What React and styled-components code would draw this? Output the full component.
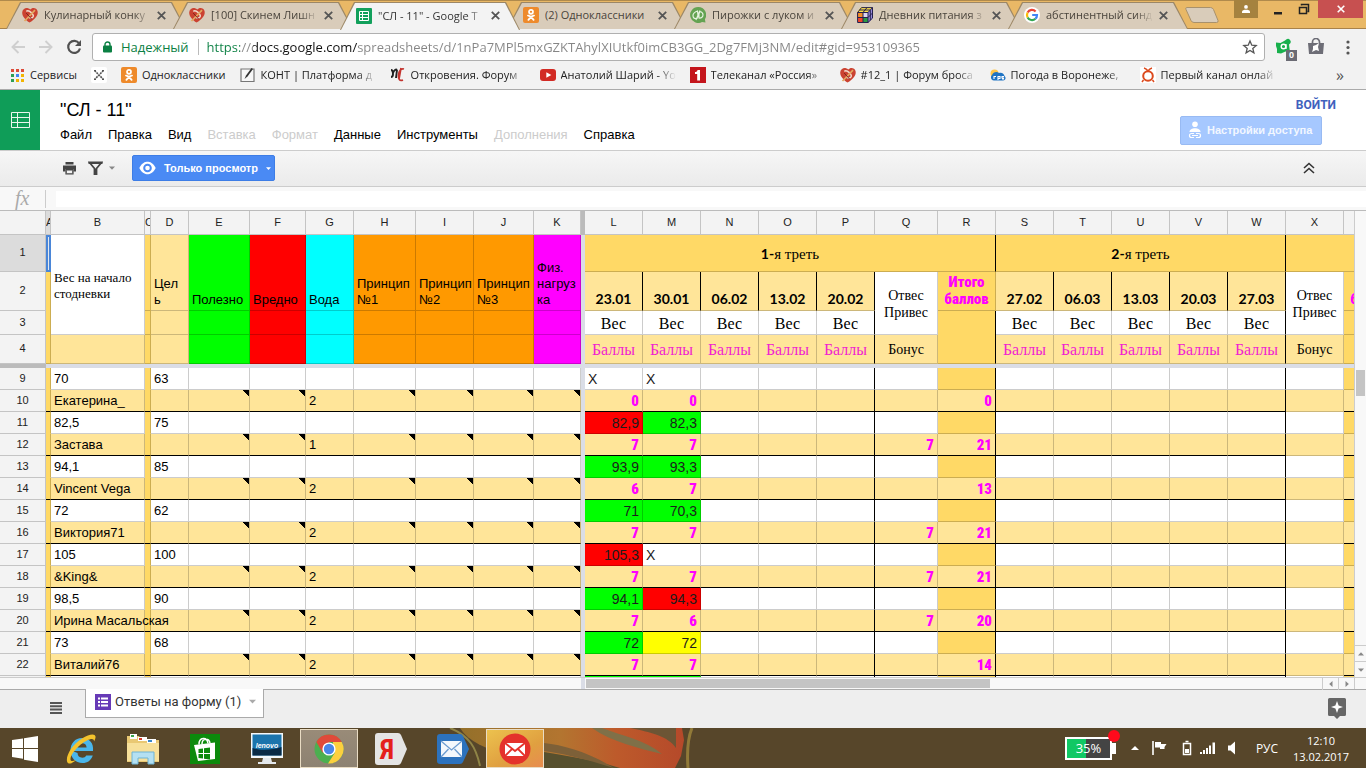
import React from 'react';
import styled, { createGlobalStyle, css } from 'styled-components';

const UI = '"Open Sans", "Noto Sans", sans-serif';
const ARIAL = 'Arial, "Liberation Sans", sans-serif';
const TIMES = '"Liberation Serif", "Times New Roman", serif';
const HEAVY = 'Impact, "Roboto Condensed", "Open Sans Condensed", Roboto, sans-serif';

const GOLD = '#ffd966';
const CREAM = '#ffe599';
const GREEN = '#00ff00';
const RED = '#ff0000';
const CYAN = '#00ffff';
const ORANGE = '#ff9900';
const PINK = '#ff00ff';
const YELLOW = '#ffff00';
const LINE = 'rgba(0, 0, 0, 0.2)';

const Global = createGlobalStyle`
  * { box-sizing: border-box; }
  body { margin: 0; font-family: ${ARIAL}; color: #000; overflow: hidden; }
  button, input { font: inherit; color: inherit; margin: 0; padding: 0; border: 0; background: none; }
  svg { display: block; flex: none; }
`;

const Page = styled.div`
  display: flex;
  flex-direction: column;
  height: 100vh;
  background: #fff;
`;

/* ---------- browser window ---------- */

const TabStrip = styled.div`
  display: flex;
  flex: none;
  height: 29px;
  padding: 1px 3px 0 6px;
  background: #e9b866;
  border-top: 1px solid #b08a4c;
  border-bottom: 1px solid #a8824a;
  font-family: ${UI};
`;

const slant = css`clip-path: polygon(14px 0, calc(100% - 14px) 0, 100% 100%, 0 100%);`;

const TabBox = styled.button`
  position: relative;
  display: flex;
  align-items: center;
  flex: 0 1 180px;
  height: ${p => (p.$active ? 28 : 27)}px;
  margin-right: -13px;
  padding: 0 16px 1px;
  gap: 6px;
  z-index: ${p => (p.$active ? 2 : 1)};
  font-size: 11px;
  line-height: 16px;
  color: ${p => (p.$active ? '#333' : '#4a443c')};
  &::before, &::after { content: ''; position: absolute; inset: 0; z-index: -2; ${slant} background: #9c8766; }
  &::after { inset: 1px 1px 0; z-index: -1; background: ${p => (p.$active ? '#f3f3f3' : '#d9ccba')}; }
`;

const fadeRight = css`mask-image: linear-gradient(to right, #000 84%, transparent);`;

const TabTitle = styled.span`
  flex: 0 0 107px;
  overflow: hidden;
  white-space: nowrap;
  text-align: left;
  ${p => p.$fade && fadeRight}
`;

const NewTab = styled.button`
  width: 36px;
  height: 18px;
  margin: 4px auto 0 9px;
`;

const WinControls = styled.div`
  display: flex;
  height: 18px;
  margin-top: -2px;
`;

const WinButton = styled.button`
  display: flex;
  align-items: center;
  justify-content: center;
  width: ${p => p.$w}px;
  background: ${p => p.$bg || 'transparent'};
`;

const AddressRow = styled.div`
  display: flex;
  align-items: center;
  flex: none;
  height: 33px;
  padding: 3px 9px 0 10px;
  background: #f2f2f2;
`;

const NavButton = styled.button`
  width: 28px;
  height: 26px;
  display: flex;
  align-items: center;
`;

const Omnibox = styled.div`
  display: flex;
  align-items: center;
  flex: 1;
  height: 28px;
  margin: 0 10px 0 -2px;
  padding: 0 6px 0 10px;
  background: #fff;
  border: 1px solid #b0b0b0;
  border-radius: 3px;
  font-family: ${UI};
`;

const Secure = styled.span`
  margin-left: 9px;
  padding-right: 9px;
  color: #0b8043;
  font-size: 13px;
  line-height: 16px;
  border-right: 1px solid #bbb;
`;

const Url = styled.input`
  flex: 1;
  min-width: 0;
  margin-left: 8px;
  height: 24px;
  outline: 0;
  font-size: 13px;
  color: transparent;
  background: linear-gradient(to right, #0b8043 33px, #888 33px 46px, #111 46px 151px, #858585 151px);
  background-clip: text;
  -webkit-background-clip: text;
`;

const ExtRow = styled.div`
  display: flex;
  align-items: center;
  gap: 14px;
`;

const Ext = styled.button`
  position: relative;
  width: 18px;
  height: 18px;
`;

const ExtCount = styled.span`
  position: absolute;
  right: -4px;
  bottom: -5px;
  width: 11px;
  height: 11px;
  background: #6b6b74;
  color: #fff;
  font: bold 9px/11px ${ARIAL};
`;

const Bookmarks = styled.nav`
  display: flex;
  align-items: center;
  flex: none;
  gap: 14px;
  height: 28px;
  padding: 0 22px 2px 9px;
  background: #f2f2f2;
  border-bottom: 1px solid #aaa;
  font-family: ${UI};
`;

const Bookmark = styled.a`
  display: flex;
  align-items: center;
  gap: 5px;
  flex: none;
  font-size: 11px;
  line-height: 16px;
  color: #222;
  text-decoration: none;
`;

const BookmarkLabel = styled.span`
  overflow: hidden;
  white-space: nowrap;
  ${p => p.$fade && css`width: 115px; ${fadeRight}`}
`;

const More = styled.button`
  margin-left: auto;
  font-size: 16px;
  line-height: 16px;
  color: #555;
`;

/* ---------- document header ---------- */

const DocHeader = styled.header`
  display: flex;
  flex: none;
  height: 61px;
  border-bottom: 1px solid #ccc;
`;

const Logo = styled.a`
  display: flex;
  align-items: center;
  justify-content: center;
  width: 40px;
  height: 60px;
  background: #0f9d58;
`;

const DocMain = styled.div`
  flex: 1;
  padding: 9px 0 0 20px;
`;

const Title = styled.h1`
  margin: 0;
  font-size: 18px;
  line-height: 22px;
  font-weight: 400;
`;

const Menu = styled.nav`
  display: flex;
  gap: 16px;
  margin-top: 6px;
`;

const MenuItem = styled.button`
  font-size: 13px;
  line-height: 16px;
  color: #000;
  &:disabled { color: #ccc; }
`;

const DocSide = styled.div`
  display: flex;
  flex-direction: column;
  align-items: flex-end;
  padding: 7px 30px 0 0;
`;

const SignIn = styled.a`
  font: bold 12px/16px Roboto, ${ARIAL};
  color: #3f61bd;
  text-decoration: none;
`;

const Share = styled.button`
  display: flex;
  align-items: center;
  gap: 5px;
  width: 142px;
  height: 29px;
  margin: 3px 14px 0 0;
  padding: 0 7px 2px;
  border: 1px solid #98baf3;
  border-radius: 2px;
  background: #a6c8ff;
  color: #f2f7ff;
  font-weight: bold;
  font-size: 11px;
  white-space: nowrap;
`;

const Toolbar = styled.div`
  display: flex;
  align-items: center;
  flex: none;
  height: 36px;
  padding: 0 51px 1px 62px;
  background: linear-gradient(#f6f6f6, #ebebeb);
  border-bottom: 1px solid #ccc;
`;

const Tool = styled.button`
  display: flex;
  align-items: center;
  gap: 6px;
  margin-right: ${p => p.$gap || 0}px;
`;

const CollapseButton = styled.button`
  margin-left: auto;
`;

const ViewOnly = styled.button`
  display: flex;
  align-items: center;
  width: 143px;
  height: 26px;
  padding: 0 4px 0 6px;
  gap: 8px;
  border: 1px solid #3d7de6;
  border-radius: 2px;
  background: #4a8af4;
  color: #fff;
  font-weight: bold;
  font-size: 11px;
  white-space: nowrap;
`;

const FormulaBar = styled.div`
  display: flex;
  align-items: center;
  flex: none;
  height: 24px;
  background: #f8f8f8;
  border-bottom: 1px solid #bbb;
`;

const Fx = styled.label`
  width: 46px;
  padding-left: 15px;
  height: 18px;
  border-right: 1px solid #ccc;
  font: italic 20px/16px ${TIMES};
  color: #aaa;
`;

const FormulaInput = styled.input`
  flex: 1;
  height: 16px;
  margin-left: 10px;
  background: #fff;
  outline: 0;
`;

/* ---------- spreadsheet ---------- */

const GridArea = styled.div`
  display: flex;
  flex: 1;
  min-height: 0;
`;

const GridClip = styled.div`
  flex: 1;
  min-width: 0;
  overflow: hidden;
`;

const Sheet = styled.table`
  table-layout: fixed;
  width: 100%;
  border-collapse: separate;
  border-spacing: 0;
  font-size: 13px;
  line-height: 16px;
`;

const HeadCell = styled.th`
  height: ${p => p.$h || 22}px;
  padding: 0 0 2px;
  overflow: hidden;
  font-weight: 400;
  font-size: 11px;
  text-align: center;
  color: #222;
  background: ${p => (p.$on ? '#dcdcdc' : '#f3f3f3')};
  border-right: 1px solid #c4c4c4;
  border-bottom: 1px solid #c4c4c4;
`;

const Cell = styled.td`
  padding: ${p => (p.$v === 'middle' ? '2px 3px 0' : '0 3px 2px')};
  vertical-align: ${p => p.$v || 'bottom'};
  text-align: ${p => p.$align || 'left'};
  white-space: nowrap;
  background-color: ${p => p.$bg || '#fff'};
  border-right: 1px solid ${p => (p.$right ? '#000' : LINE)};
  border-bottom: 1px solid ${p => (p.$bottom === 'black' ? '#000' : p.$bottom === 'none' ? 'transparent' : LINE)};
  ${p => p.$note && css`
    background-image: linear-gradient(to bottom left, #000 50%, transparent 54%);
    background-size: 6px 6px;
    background-position: top right;
    background-repeat: no-repeat;
  `}
`;

const SelectedCell = styled(Cell)`
  padding: 0;
  background-color: #e3e8ee;
  border: 0;
  box-shadow: inset 0 0 0 2px #4a86d8;
`;

const WeightCell = styled(Cell)`
  font-size: 14px;
  color: #1c1c1c;
`;

const ScoreCell = styled(Cell)`
  text-align: right;
  font-family: ${HEAVY};
  font-weight: 900;
  font-size: 15px;
  color: ${PINK};
`;

const TotalHead = styled(ScoreCell)`
  text-align: center;
  line-height: 17px;
  padding: 0 0 2px;
`;

const SerifCell = styled(Cell)`
  font-family: ${TIMES};
  font-size: ${p => p.$size || 16}px;
  line-height: ${p => p.$lh || 16}px;
  text-align: ${p => p.$align || 'center'};
  color: ${p => p.$color || '#000'};
`;

const DateCell = styled(Cell)`
  padding-bottom: 3px;
  font-family: Lato, ${UI};
  font-size: 14px;
  font-weight: bold;
  text-align: center;
`;

const Bold = styled.b`
  font-family: Lato, ${UI};
  font-size: 14px;
`;

const FreezeCell = styled.td`
  padding: 0;
  height: ${p => p.$h || 0}px;
  background: ${p => (p.$dark ? '#bbb' : '#dadde6')};
`;

const VScroll = styled.div`
  display: flex;
  flex-direction: column;
  width: 12px;
  padding-top: 159px;
  background: #f8f8f8;
  border-left: 1px solid #ccc;
`;

const VThumb = styled.div`
  height: 26px;
  margin: 0 1px auto;
  background: #c4c4c4;
`;

const ScrollButton = styled.button`
  display: flex;
  align-items: center;
  justify-content: center;
  flex: none;
  width: ${p => (p.$side ? 16 : 11)}px;
  height: ${p => (p.$side ? 12 : 16)}px;
  border: 0 solid #ccc;
  border-width: ${p => (p.$side ? '0 0 0 1px' : '1px 0 0')};
`;

const HScroll = styled.div`
  display: flex;
  flex: none;
  height: 13px;
  background: #f8f8f8;
  border-top: 1px solid #ccc;
  border-bottom: 1px solid #aaa;
`;

const FrozenFoot = styled.div`
  width: 585px;
  border-right: 4px solid #dadde6;
`;

const HTrack = styled.div`
  flex: 1;
  padding: 1px;
`;

const HThumb = styled.div`
  width: 55%;
  height: 9px;
  background: #c4c4c4;
`;

const Corner = styled.div`
  width: 12px;
  border-left: 1px solid #ccc;
`;

const SheetBar = styled.div`
  display: flex;
  flex: none;
  height: 38px;
  padding: 0 20px 2px 50px;
  background: #eee;
`;

const SheetTab = styled.button`
  display: flex;
  align-items: center;
  width: 179px;
  height: 29px;
  margin: -1px auto 0 23px;
  padding: 0 7px 3px 9px;
  gap: 4px;
  background: #fff;
  border: 1px solid #aaa;
  border-top: 0;
  font-size: 13px;
  color: #333;
  white-space: nowrap;
  position: relative;
`;

const TabName = styled.span`
  flex: 1;
  text-align: left;
  font-family: Roboto, ${ARIAL};
`;

const BarButton = styled.button`
  align-self: center;
`;

/* ---------- taskbar ---------- */

const TaskBar = styled.footer`
  position: relative;
  display: flex;
  flex: none;
  height: 40px;
  background: #57462a;
  color: #fff;
  font-family: ${UI};
`;

const Wallpaper = styled.svg`
  position: absolute;
  left: 330px;
  top: 0;
`;

const TaskItem = styled.button`
  position: relative;
  display: flex;
  align-items: center;
  justify-content: center;
  width: ${p => p.$w || 58}px;
  height: 39px;
  margin: 1px ${p => (p.$w ? 0 : 2)}px 0;
  ${p => p.$bg && css`background: ${p.$bg}; border: 1px solid #e9dcc4;`}
`;

const Tray = styled.div`
  position: relative;
  display: flex;
  align-items: center;
  margin-left: auto;
  padding-right: 17px;
`;

const Charge = styled.div`
  position: relative;
  width: 47px;
  height: 23px;
  border: 2px solid #fff;
  background: linear-gradient(to right, #10c864 19px, #444 19px);
  font-size: 13px;
  line-height: 19px;
  text-align: center;
  &::before { content: ''; position: absolute; right: -6px; top: 4px; width: 4px; height: 11px; background: #fff; }
  &::after { content: ''; position: absolute; right: -10px; top: -9px; width: 12px; height: 12px; border-radius: 6px; background: #ff0a1c; }
`;

const TrayIcon = styled.button`
  margin-left: ${p => p.$gap}px;
`;

const Lang = styled.button`
  margin-left: 18px;
  width: 26px;
  font-size: 12px;
`;

const Clock = styled.time`
  width: 56px;
  margin-left: 13px;
  padding-top: 2px;
  text-align: center;
  font-size: 11px;
  line-height: 16px;
  white-space: nowrap;
`;

/* ---------- icons ---------- */

const Caret = ({ color = '#888', dir = 'down', size = 6 }) => {
  const turn = { down: 0, left: 90, up: 180, right: 270 }[dir];
  return (
    <svg width={size} height={size} viewBox="0 0 6 6">
      <path d="M0 1.5h6L3 4.8z" fill={color} transform={`rotate(${turn} 3 3)`} />
    </svg>
  );
};

const HeartIcon = () => (
  <svg width="16" height="16" viewBox="0 0 16 16">
    <path d="M7.500 15.500C4 13.500 0 9.500.2 5.500.4 2 3.500.5 6 1.200c1 .3 1.700.8 2.300 1.400C9.500 1 12 .4 14 1.800c2.500 1.900 2 5.500.2 8-1.700 2.500-4.200 4.500-6.700 5.700z" fill="#cb4231" />
    <path d="M4.300 4.300c1.600-1.300 3.400-.2 5 1.300 1.700 1.600 2.700 3.300 1.400 4.700-1.200 1.200-3.200.6-4.700-.7" fill="none" stroke="#f0d9cc" strokeWidth="1.500" />
    <path d="m2.500 14 3-3M5.500 11 13 3.200" stroke="#e3a860" strokeWidth="1.700" />
    <path d="M4.200 6 9.800 12.300" stroke="#7e241c" strokeWidth="1" />
  </svg>
);

const SheetsIcon = () => (
  <svg width="16" height="16" viewBox="0 0 16 16">
    <rect width="16" height="16" rx="1" fill="#12a05c" />
    <path d="M3.500 3.500h9v9h-9zM3.500 6.500h9M3.500 9.500h9M6.500 3.500v9" fill="none" stroke="#fff" />
  </svg>
);

const OkIcon = () => (
  <svg width="16" height="16" viewBox="0 0 16 16">
    <rect width="16" height="16" rx="2" fill="#ee8a2b" />
    <circle cx="8" cy="4.800" r="2" fill="none" stroke="#fff" strokeWidth="1.700" />
    <path d="M5 8.600c2 1.300 4 1.300 6 0M8 9.800l-2.600 3M8 9.800l2.600 3" fill="none" stroke="#fff" strokeWidth="1.800" strokeLinecap="round" />
  </svg>
);

const LeafIcon = () => (
  <svg width="16" height="16" viewBox="0 0 16 16">
    <path d="M8 0a8 8 0 1 0 4 15l3.500.6-.6-3.300A8 8 0 0 0 8 0z" fill="#64a352" />
    <path d="M7 11.500c-3 .6-4-1-4-3s2-3.500 4.500-4.500c.6 2 .6 5-.5 7.500zM9 11c2.500.3 4-1.200 4-3.200S12 5 10 4.500C8.500 6.500 8.500 9 9 11zM6 13l4-9.500" fill="none" stroke="#e6f3df" strokeWidth="1.200" />
  </svg>
);

const CubeIcon = () => (
  <svg width="16" height="16" viewBox="0 0 16 16">
    <path d="M4 0h12l-4 5H0z" fill="#ffe24a" />
    <path d="M0 5h11v11H1z" fill="#f0452c" />
    <path d="M11 5l5-5v11l-5 5z" fill="#9a8ad8" />
    <path d="M1 5h5v5H1z" fill="#f48e28" /><path d="M6 5h5v5H6z" fill="#ddd6f0" /><path d="M6 11h5v5H6z" fill="#2b9a44" />
    <path d="M.6 5.500 4.500.6h11v10.500L11 15.500H.6zM.6 5.500H11v10M11 5.500 15.500.6M6 5.500v10M.6 10.500H11l4.500-4.500M6 5.500 10 .6M13.300 3.200v10M2.500 3h10.500" fill="none" stroke="#24204e" strokeWidth="1" />
  </svg>
);

const GoogleIcon = () => (
  <svg width="16" height="16" viewBox="0 0 16 16">
    <circle cx="8" cy="8" r="8" fill="#fff" />
    <g fill="none" strokeWidth="2.200">
      <path d="M11.600 4.400A5 5 0 0 0 3.600 5.600" stroke="#ea4335" />
      <path d="M3.600 5.600a5 5 0 0 0 0 4.800" stroke="#fbbc05" />
      <path d="M3.600 10.400a5 5 0 0 0 7.800 1.400" stroke="#34a853" />
      <path d="M11.400 11.800A5 5 0 0 0 13 8H8.200" stroke="#4285f4" />
    </g>
  </svg>
);

const Cross = ({ color = '#555', size = 9, w = 1.8 }) => (
  <svg width={size} height={size} viewBox="0 0 9 9"><path d="m.8.8 7.400 7.400M8.200.8.8 8.200" stroke={color} strokeWidth={w} /></svg>
);

const AppsIcon = () => {
  const colors = ['#dd4b39', '#dd4b39', '#dd4b39', '#2e9e55', '#4285f4', '#f2b400', '#2e9e55', '#f2b400', '#f2b400'];
  return (
    <svg width="16" height="16" viewBox="0 0 16 16">
      {colors.map((c, i) => <rect key={i} x={2 + (i % 3) * 5} y={2 + Math.floor(i / 3) * 5} width="3" height="3" fill={c} />)}
    </svg>
  );
};

const DotsIcon = () => (
  <svg width="16" height="16" viewBox="0 0 16 16">
    <rect width="16" height="16" rx="2" fill="#fff" />
    <path d="m3.500 3.500 9 9M12.500 3.500l-9 9" stroke="#555" strokeWidth="1.600" strokeDasharray="2 .8" />
    <path d="M3 3.500h2M11 3.500h2M3 12.500h2M11 12.500h2" stroke="#555" strokeWidth="1.200" />
  </svg>
);

const PenIcon = () => (
  <svg width="16" height="16" viewBox="0 0 16 16">
    <path d="M1 2h13v12.500H1z" fill="#f7f7f7" stroke="#777" strokeWidth="1.200" />
    <path d="m4.500 12 1.500-3.500L11.500 1l1.500 1-5.500 7.500z" fill="#333" />
  </svg>
);

const McIcon = () => (
  <svg width="16" height="16" viewBox="0 0 16 16">
    <path d="M1 3c2 0 2 2 2 4s-1 3-2 3M3 6c1-3 3-4 4-3M7 3 6 11" fill="none" stroke="#222" strokeWidth="1.900" />
    <path d="M14 2c-3-1-5 2-5.500 6-.3 4 1 6.500 4.500 5M11 1 9 12" fill="none" stroke="#c3342f" strokeWidth="1.700" />
  </svg>
);

const YtIcon = () => (
  <svg width="16" height="16" viewBox="0 0 16 16"><rect y="2" width="16" height="12" rx="3" fill="#d22a24" /><path d="m6.300 5.300 5 2.700-5 2.700z" fill="#fff" /></svg>
);

const OneIcon = () => (
  <svg width="16" height="16" viewBox="0 0 16 16"><path fill="#c4151c" d="M0 0h16v16H0z" /><path d="M7.500 3H10v10.500H7.200V7H5V5c1.500 0 2.300-.6 2.500-2z" fill="#fff" /></svg>
);

const WeatherIcon = () => (
  <svg width="16" height="16" viewBox="0 0 16 16">
    <circle cx="4.500" cy="6.500" r="4" fill="#ffc64a" />
    <path d="M2 8c1-3 5-4 7-2 3-1 5 1 5.500 3 2 1.500 1 4.500-1.500 4.500H4c-3 0-4-4-2-5.500z" fill="#1f74c4" />
    <path d="M4 12V9.500h2M8 13V9.500h2v2H8M14 9.500h-2v1.500h1.500V12H12" fill="none" stroke="#fff" strokeWidth="1.100" />
  </svg>
);

const RingIcon = () => (
  <svg width="16" height="16" viewBox="0 0 16 16">
    <rect width="16" height="16" fill="#fff" />
    <circle cx="8" cy="9" r="4.800" fill="none" stroke="#dc4a1e" strokeWidth="2" />
    <path d="M4 1c2 .5 3 1.500 4 3 1-1.500 2-2.500 4-3M3.500 13 2 15M12.500 13l1.500 2" fill="none" stroke="#dc4a1e" strokeWidth="1.500" />
  </svg>
);

const PersonIcon = () => (
  <svg width="8" height="8" viewBox="0 0 8 8"><circle cx="4" cy="1.900" r="1.900" fill="#fff" /><path d="M0 8V6.600c0-2.600 8-2.600 8 0V8z" fill="#fff" /></svg>
);

/* ---------- data ---------- */

const tabs = [
  { title: 'Кулинарный конку', Icon: HeartIcon, fade: true },
  { title: '[100] Скинем Лишн', Icon: HeartIcon, fade: true },
  { title: '"СЛ - 11" - Google Т', Icon: SheetsIcon, fade: true, active: true },
  { title: '(2) Одноклассники', Icon: OkIcon },
  { title: 'Пирожки с луком и', Icon: LeafIcon, fade: true },
  { title: 'Дневник питания з', Icon: CubeIcon, fade: true },
  { title: 'абстинентный синд', Icon: GoogleIcon, fade: true },
];

const bookmarks = [
  ['Сервисы', AppsIcon],
  ['', DotsIcon],
  ['Одноклассники', OkIcon],
  ['КОНТ | Платформа д', PenIcon, true],
  ['Откровения. Форум', McIcon, true],
  ['Анатолий Шарий - Yo', YtIcon, true],
  ['Телеканал «Россия»', OneIcon, true],
  ['#12_1 | Форум броса', HeartIcon, true],
  ['Погода в Воронеже,', WeatherIcon, true],
  ['Первый канал онлай', RingIcon, true],
];

const menu = [
  ['Файл'], ['Правка'], ['Вид'], ['Вставка', true], ['Формат', true],
  ['Данные'], ['Инструменты'], ['Дополнения', true], ['Справка'],
];

const frozenCols = [['A', 5], ['B', 94], ['C', 6], ['D', 38], ['E', 61], ['F', 56], ['G', 48], ['H', 62], ['I', 58], ['J', 60], ['K', 47]];
const freeCols = [
  ['L', 58], ['M', 58], ['N', 58], ['O', 58], ['P', 58], ['Q', 63], ['R', 58],
  ['S', 58], ['T', 58], ['U', 58], ['V', 58], ['W', 58], ['X', 58], ['Y', 58],
];

const categories = [
  [GREEN, 'Полезно'], [RED, 'Вредно'], [CYAN, 'Вода'],
  [ORANGE, <>Принцип<br />№1</>], [ORANGE, <>Принцип<br />№2</>], [ORANGE, <>Принцип<br />№3</>],
  [PINK, <>Физ.<br />нагруз<br />ка</>],
];

const firstDates = ['23.01', '30.01', '06.02', '13.02', '20.02'];
const secondDates = ['27.02', '06.03', '13.03', '20.03', '27.03'];

const people = [
  { row: 9, name: 'Екатерина_', start: '70', goal: '63', water: 2, weights: [['X'], ['X']], scores: [0, 0], bonus: '', total: 0 },
  { row: 11, name: 'Застава', start: '82,5', goal: '75', water: 1, weights: [['82,9', RED], ['82,3', GREEN]], scores: [7, 7], bonus: 7, total: 21 },
  { row: 13, name: 'Vincent Vega', start: '94,1', goal: '85', water: 2, weights: [['93,9', GREEN], ['93,3', GREEN]], scores: [6, 7], bonus: '', total: 13 },
  { row: 15, name: 'Виктория71', start: '72', goal: '62', water: 2, weights: [['71', GREEN], ['70,3', GREEN]], scores: [7, 7], bonus: 7, total: 21 },
  { row: 17, name: '&King&', start: '105', goal: '100', water: 2, weights: [['105,3', RED], ['X']], scores: [7, 7], bonus: 7, total: 21 },
  { row: 19, name: 'Ирина Масальская', start: '98,5', goal: '90', water: 2, weights: [['94,1', GREEN], ['94,3', RED]], scores: [7, 6], bonus: 7, total: 20 },
  { row: 21, name: 'Виталий76', start: '73', goal: '68', water: 2, weights: [['72', GREEN], ['72', YELLOW]], scores: [7, 7], bonus: '', total: 14 },
  { row: '', name: '', start: '', goal: '', water: '', weights: [['', GREEN], ['', GREEN]], scores: ['', ''], bonus: '', total: '' },
];

/* ---------- sheet parts ---------- */

function ColumnHeads() {
  const head = ([name]) => <HeadCell key={name} scope="col" $h={24} $on={name === 'A'}>{name}</HeadCell>;
  return (
    <tr>
      <HeadCell $h={24} />
      {frozenCols.map(head)}
      <FreezeCell $dark />
      {freeCols.map(head)}
    </tr>
  );
}

function SheetHead() {
  const five = [0, 1, 2, 3, 4];
  const weightHeads = group => five.map(i => <SerifCell key={group + i} $right={i === 4}>Вес</SerifCell>);
  const scoreHeads = group => five.map(i => <SerifCell key={group + i} $v="middle" $bg={CREAM} $color="#f01fd0" $right={i === 4}>Баллы</SerifCell>);
  const fills = key => categories.map(([bg], i) => <Cell key={key + i} $bg={bg} />);
  return (
    <>
      <tr>
        <HeadCell scope="row" $h={37} $on>1</HeadCell>
        <SelectedCell />
        <SerifCell rowSpan={3} $v="middle" $align="left" $size={13}>Вес на начало<br />стодневки</SerifCell>
        <Cell rowSpan={2} $bg={GOLD} />
        <Cell rowSpan={2} $bg={CREAM}>Цел<br />ь</Cell>
        {categories.map(([bg, text], i) => <Cell key={i} rowSpan={2} $bg={bg}>{text}</Cell>)}
        <FreezeCell rowSpan={4} />
        <SerifCell colSpan={7} $v="middle" $size={15} $bg={GOLD} $right><Bold>1-</Bold>я треть</SerifCell>
        <SerifCell colSpan={5} $v="middle" $size={15} $bg={GOLD} $right><Bold>2-</Bold>я треть</SerifCell>
        <Cell colSpan={2} $bg={GOLD} />
      </tr>
      <tr>
        <HeadCell scope="row" $h={39}>2</HeadCell>
        <Cell rowSpan={3} $bg={GOLD} />
        {firstDates.map(d => <DateCell key={d} $bg={CREAM} $right>{d}</DateCell>)}
        <SerifCell rowSpan={2} $v="middle" $size={14} $lh={17}>Отвес<br />Привес</SerifCell>
        <TotalHead $bg={GOLD}>Итого<br />баллов</TotalHead>
        {secondDates.map(d => <DateCell key={d} $bg={CREAM} $right>{d}</DateCell>)}
        <SerifCell rowSpan={2} $v="middle" $size={14} $lh={17}>Отвес<br />Привес</SerifCell>
        <TotalHead $bg={GOLD}>Итого<br />баллов</TotalHead>
      </tr>
      <tr>
        <HeadCell scope="row" $h={24}>3</HeadCell>
        <Cell $bg={GOLD} />
        <Cell $bg={CREAM} />
        {fills('r3')}
        {weightHeads('a')}
        <Cell rowSpan={2} $bg={GOLD} $right />
        {weightHeads('b')}
        <Cell $bg={GOLD} />
      </tr>
      <tr>
        <HeadCell scope="row" $h={29}>4</HeadCell>
        <Cell $bg={CREAM} />
        <Cell $bg={GOLD} />
        <Cell $bg={CREAM} />
        {fills('r4')}
        {scoreHeads('a')}
        <SerifCell $v="middle" $size={14} $bg={CREAM}>Бонус</SerifCell>
        {scoreHeads('b')}
        <SerifCell $v="middle" $size={14} $bg={CREAM}>Бонус</SerifCell>
        <Cell $bg={GOLD} />
      </tr>
      <tr>
        <FreezeCell $h={4} $dark />
        <FreezeCell $h={4} colSpan={26} />
      </tr>
    </>
  );
}

function PersonRows({ p }) {
  const low = { $bg: CREAM, $bottom: 'black' };
  return (
    <>
      <tr>
        <HeadCell scope="row">{p.row}</HeadCell>
        <Cell $bg={GOLD} $bottom="none" />
        <Cell>{p.start}</Cell>
        <Cell $bg={GOLD} $bottom="none" />
        <Cell>{p.goal}</Cell>
        {categories.map((c, i) => <Cell key={i} />)}
        <FreezeCell />
        {p.weights.map(([v, bg], i) => (
          <WeightCell key={i} $bg={bg} $align={bg ? 'right' : 'left'}>{v}</WeightCell>
        ))}
        <Cell /><Cell /><Cell $right />
        <Cell />
        <Cell $bg={GOLD} $right />
        <Cell /><Cell /><Cell /><Cell /><Cell $right />
        <Cell />
        <Cell $bg={GOLD} />
      </tr>
      {p.name && (
        <tr>
          <HeadCell scope="row">{p.row + 1}</HeadCell>
          <Cell $bg={GOLD} $bottom="black" />
          <Cell {...low}>{p.name}</Cell>
          <Cell $bg={GOLD} $bottom="black" />
          <Cell {...low} />
          {categories.map((c, i) => <Cell key={i} {...low} $note={i !== 2}>{i === 2 ? p.water : null}</Cell>)}
          <FreezeCell />
          {p.scores.map((s, i) => <ScoreCell key={i} {...low}>{s}</ScoreCell>)}
          <Cell {...low} /><Cell {...low} /><Cell {...low} $right />
          <ScoreCell {...low}>{p.bonus}</ScoreCell>
          <ScoreCell {...low} $right>{p.total}</ScoreCell>
          <Cell {...low} /><Cell {...low} /><Cell {...low} /><Cell {...low} /><Cell {...low} $right />
          <Cell $bg={CREAM} />
          <Cell {...low} />
        </tr>
      )}
    </>
  );
}

function Browser() {
  return (
    <>
      <TabStrip>
        {tabs.map(({ title, Icon, fade, active }) => (
          <TabBox key={title} $active={active}>
            <Icon />
            <TabTitle $fade={fade}>{title}</TabTitle>
            <Cross />
          </TabBox>
        ))}
        <NewTab aria-label="Новая вкладка">
          <svg width="36" height="18" viewBox="0 0 36 18"><path d="M2.500 1.500h24q2 0 3 2l4.500 11q.6 2-1.500 2H10q-2 0-3-2l-5-11q-.6-2 .5-2z" fill="#d9ccba" stroke="#a8916c" /></svg>
        </NewTab>
        <WinControls>
          <WinButton $w={24} $bg="#a5823f" aria-label="Профиль"><PersonIcon /></WinButton>
          <WinButton $w={34} aria-label="Свернуть"><svg width="34" height="18"><path d="M16 12h8v2.500h-8z" fill="#222" /></svg></WinButton>
          <WinButton $w={26} aria-label="Развернуть">
            <svg width="26" height="18"><path d="M7.500 7.500h7v6h-7zM9.500 5.500v-1h7v7h-1" fill="none" stroke="#222" strokeWidth="1.500" /></svg>
          </WinButton>
          <WinButton $w={45} $bg="#c75050" aria-label="Закрыть"><Cross color="#fff" size={8} w={1.8} /></WinButton>
        </WinControls>
      </TabStrip>
      <AddressRow>
        <NavButton aria-label="Назад">
          <svg width="16" height="16"><path d="M15 8H3M8.500 2 2.500 8l6 6" fill="none" stroke="#cfcfcf" strokeWidth="1.900" /></svg>
        </NavButton>
        <NavButton aria-label="Вперёд">
          <svg width="16" height="16"><path d="M1 8h12M7.500 2l6 6-6 6" fill="none" stroke="#cfcfcf" strokeWidth="1.900" /></svg>
        </NavButton>
        <NavButton aria-label="Обновить">
          <svg width="16" height="16"><path d="M13.200 4.500A6 6 0 1 0 14 9.500" fill="none" stroke="#505050" strokeWidth="2.200" /><path d="M15 1v6H9z" fill="#505050" /></svg>
        </NavButton>
        <Omnibox>
          <svg width="9" height="12" viewBox="0 0 9 12"><path d="M2 5V3.500a2.500 2.500 0 0 1 5 0V5" fill="none" stroke="#0b8043" strokeWidth="1.400" /><rect y="4.500" width="9" height="7" rx="1" fill="#0b8043" /></svg>
          <Secure>Надежный</Secure>
          <Url aria-label="Адрес" readOnly value="https://docs.google.com/spreadsheets/d/1nPa7MPl5mxGZKTAhylXIUtkf0imCB3GG_2Dg7FMj3NM/edit#gid=953109365" />
          <svg width="16" height="16"><path d="m8 2 1.800 4.200 4.400.4-3.400 2.900 1.100 4.300L8 11.500l-3.900 2.300 1.100-4.300-3.400-2.900 4.400-.4z" fill="none" stroke="#555" strokeWidth="1.300" /></svg>
        </Omnibox>
        <ExtRow>
          <Ext aria-label="Avast">
            <svg width="18" height="18"><path d="M1 4.500 5.500 5 10 2.500Q13-.5 15 2t-1 4.500l.5 4L15 14l-4.500-.5L6 15.500 2 15V11L1 8z" fill="#18b04c" /><circle cx="8.500" cy="8.500" r="2.300" fill="none" stroke="#fff" strokeWidth="1.400" /><path d="M11 6v5" stroke="#fff" strokeWidth="1.300" /></svg>
            <ExtCount>0</ExtCount>
          </Ext>
          <Ext aria-label="Покупки">
            <svg width="18" height="18"><path d="M1 5h16l-1 11H2z" fill="#6d6d76" /><path d="M5.500 6V4a3.500 3.500 0 0 1 7 0v2" fill="none" stroke="#6d6d76" strokeWidth="1.700" /><path d="m6 8 3-1 3-2-1 4 1 4-3-1-4 2 1-3z" fill="#fff" /></svg>
          </Ext>
          <Ext aria-label="Меню">
            <svg width="18" height="18"><circle cx="9" cy="4" r="1.600" fill="#555" /><circle cx="9" cy="9.500" r="1.600" fill="#555" /><circle cx="9" cy="15" r="1.600" fill="#555" /></svg>
          </Ext>
        </ExtRow>
      </AddressRow>
      <Bookmarks>
        {bookmarks.map(([label, Icon, fade], i) => (
          <Bookmark key={i} href="#">
            <Icon />
            {label && <BookmarkLabel $fade={fade}>{label}</BookmarkLabel>}
          </Bookmark>
        ))}
        <More>»</More>
      </Bookmarks>
    </>
  );
}

function DocChrome() {
  return (
    <>
      <DocHeader>
        <Logo href="#" aria-label="Таблицы">
          <svg width="20" height="17"><path d="M1.500.5h18v15h-18zM1.500 5.500h18M1.500 10.500h18M7.500.5v15" fill="none" stroke="#e8f6ee" /></svg>
        </Logo>
        <DocMain>
          <Title>"СЛ - 11"</Title>
          <Menu>{menu.map(([m, off]) => <MenuItem key={m} disabled={off}>{m}</MenuItem>)}</Menu>
        </DocMain>
        <DocSide>
          <SignIn href="#">ВОЙТИ</SignIn>
          <Share>
            <svg width="14" height="18"><circle cx="7" cy="3.200" r="2.800" fill="#fff" /><path d="M1.500 11c0-5 11-5 11 0z" fill="#fff" /><path d="M6 12.500H3.500a2 2 0 0 0 0 4H6M8 12.500h2.500a2 2 0 0 1 0 4H8M4 14.500h6" fill="none" stroke="#fff" strokeWidth="1.200" /></svg>
            Настройки доступа
          </Share>
        </DocSide>
      </DocHeader>
      <Toolbar>
        <Tool $gap={11} aria-label="Печать">
          <svg width="15" height="14"><path d="M3.500 1h8v2.500h-8zM1 4.500h13v6h-2.500V8h-8v2.500H1zM4.500 9h6v3.500h-6z" fill="#444" /><path d="M5 9.500h5v2.500H5z" fill="#f1f1f1" /><path d="M4 8.500h7v4.500H4z" fill="none" stroke="#444" strokeWidth="1.200" /></svg>
        </Tool>
        <Tool $gap={17} aria-label="Фильтр">
          <svg width="15" height="14"><path d="M1.500 1.500h12l-5 6v5.500h-2V7.500z" fill="none" stroke="#444" strokeWidth="1.800" /><path d="M.5 1h14v2H.5zM6 8h3v5H6z" fill="#444" /></svg>
          <Caret />
        </Tool>
        <ViewOnly>
          <svg width="17" height="14"><path d="M.3 7C3 1.800 6 .8 8.500.8S14 1.800 16.700 7C14 12.200 11 13.200 8.500 13.200S3 12.200.3 7z" fill="#fff" /><circle cx="8.500" cy="7" r="3.300" fill="#fff" stroke="#4a8af4" strokeWidth="2" /></svg>
          Только просмотр
          <Caret color="#fff" size={5} />
        </ViewOnly>
        <CollapseButton aria-label="Свернуть панель">
          <svg width="12" height="12"><path d="m1 6 5-4.500L11 6M1 11l5-4.500L11 11" fill="none" stroke="#333" strokeWidth="1.600" /></svg>
        </CollapseButton>
      </Toolbar>
      <FormulaBar>
        <Fx htmlFor="formula">fx</Fx>
        <FormulaInput id="formula" />
      </FormulaBar>
    </>
  );
}

function Workbook() {
  return (
    <>
      <GridArea>
        <GridClip>
          <Sheet>
            <colgroup>
              <col width="46" />
              {frozenCols.map(([n, w]) => <col key={n} width={w} />)}
              <col width="4" />
              {freeCols.map(([n, w]) => <col key={n} width={w} />)}
            </colgroup>
            <thead><ColumnHeads /></thead>
            <tbody>
              <SheetHead />
              {people.map((p, i) => <PersonRows key={i} p={p} />)}
            </tbody>
          </Sheet>
        </GridClip>
        <VScroll>
          <VThumb />
          <ScrollButton aria-label="Вверх"><Caret dir="up" /></ScrollButton>
          <ScrollButton aria-label="Вниз"><Caret /></ScrollButton>
        </VScroll>
      </GridArea>
      <HScroll>
        <FrozenFoot />
        <HTrack><HThumb /></HTrack>
        <ScrollButton $side aria-label="Влево"><Caret dir="left" /></ScrollButton>
        <ScrollButton $side aria-label="Вправо"><Caret dir="right" /></ScrollButton>
        <Corner />
      </HScroll>
      <SheetBar>
        <BarButton aria-label="Все листы">
          <svg width="12" height="12"><path d="M0 1h12M0 4.300h12M0 7.600h12M0 11h12" stroke="#555" strokeWidth="2" /></svg>
        </BarButton>
        <SheetTab>
          <svg width="16" height="16"><path fill="#673ab7" d="M0 0h16v16H0z" /><path d="M3 4.500h2M6 4.500h7M3 8h2M6 8h7M3 11.500h2M6 11.500h7" stroke="#fff" strokeWidth="2" /></svg>
          <TabName>Ответы на форму (1)</TabName>
          <Caret color="#aaa" size={7} />
        </SheetTab>
        <BarButton aria-label="Анализ данных">
          <svg width="18" height="21"><path d="M1.500 0h15Q18 0 18 1.500v15q0 1.500-1.500 1.500H12l-3 3-3-3H1.500Q0 18 0 16.500v-15Q0 0 1.500 0z" fill="#666" /><path d="m9 3 1.600 4.400L15 9l-4.400 1.600L9 15l-1.600-4.400L3 9l4.400-1.600z" fill="#fff" /></svg>
        </BarButton>
      </SheetBar>
    </>
  );
}

function Desktop() {
  return (
    <TaskBar>
      <Wallpaper width="370" height="40" viewBox="0 0 370 40" aria-hidden="true">
        <defs>
          <linearGradient id="leaf" x1="0" x2="1"><stop offset="0" stopColor="#94702a" /><stop offset=".45" stopColor="#b37530" /><stop offset=".7" stopColor="#bd5a2b" /><stop offset="1" stopColor="#b5492a" /></linearGradient>
        </defs>
        <path d="M130 0h222l2 12-3 16-6 12h-75c-30-2-60-6-80-10-30-8-50-14-60-30z" fill="url(#leaf)" />
        <path d="M214 24c24 4 50 8 76 16h-76z" fill="#57502e" />
        <path d="M214 15c20 2 46 10 70 25-26-8-48-14-70-17z" fill="#7d6038" />
        <path d="M272 0c20 8 44 12 60 26-24-6-50-12-70-26z" fill="#7f7048" />
        <path d="M300 0c20 4 38 8 46 20V0z" fill="#6c5535" />
        <path d="M120 0c20 8 26 20 30 38" fill="none" stroke="#8f8446" strokeWidth="2" />
        <path d="M362 0c-5 12-5 26-4 40" fill="none" stroke="#917a38" strokeWidth="3" />
      </Wallpaper>
      <TaskItem $w={50} aria-label="Пуск">
        <svg width="26" height="26"><path d="m0 4 11-1.600V12H0zM12 2.200 26 0v12H12zM0 13h11v9.700L0 21zM12 13h14v13l-14-2.200z" fill="#fff" /></svg>
      </TaskItem>
      <TaskItem aria-label="Internet Explorer">
        <svg width="32" height="32" viewBox="0 0 32 32">
          <path d="M7.500 18H28c1-8-4-13-11-13S5.500 10.500 5.500 17.500 10.500 30 17.500 30c5 0 8.500-2.500 10.300-7.500h-6.600c-.8 1.500-2 2.200-3.900 2.200-3 0-4.600-1.900-4.800-4.700z" fill="#4ab6ea" />
          <path d="M12.500 14.500c.4-2.800 2.100-4.300 4.700-4.300s4.200 1.500 4.400 4.300z" fill="#57462a" />
          <path d="M3 30C-1 26 6 12 17 5.500 24 1 30 0 30.500 3.500c.2 1.500-.4 3-1.500 5 .3-3-2.500-3.300-7-1C13 12 5 22 5.500 26.500c.2 2 2.500 2 5.500.5-3 3-6.500 4.500-8 3z" fill="#f5c32c" />
        </svg>
      </TaskItem>
      <TaskItem aria-label="Проводник">
        <svg width="32" height="32" viewBox="0 0 32 32">
          <path d="M0 3h12l2 4h18v22H0z" fill="#e9c873" /><path d="M3 1h7v5H3z" fill="#fff" /><path d="M4 2h3v2H4z" fill="#3aa64c" /><path d="M11 4h9v4h-9z" fill="#fff" /><path d="M12 5h3v2h-3z" fill="#d63a2a" /><path d="M20 6h9v4h-9z" fill="#fff" /><path d="M21 7h4v2h-4z" fill="#3b88c8" />
          <path d="M0 10h32v18H0z" fill="#f7e09a" /><path d="M5 19h22v12h-6v-6H11v6H5z" fill="#b4e0f2" stroke="#6fb4d4" />
        </svg>
      </TaskItem>
      <TaskItem aria-label="Магазин">
        <svg width="30" height="30" viewBox="0 0 30 30"><path fill="#0c8a0c" d="M0 0h30v30H0z" /><path d="M4 11 25 8.500V25L8 27z" fill="#fff" /><path d="M9 10.500c0-7.500 8-8 9-1M12 10c0-6 7-6 8-1" fill="none" stroke="#fff" strokeWidth="1.500" /><path d="m8.500 15 4.500-.6V19H8.500zM14 14.300l6-.7V19h-6zM8.500 20H13v4.500L8.500 24zM14 20h6v5.500l-6-.8z" fill="#0c8a0c" /></svg>
      </TaskItem>
      <TaskItem aria-label="Lenovo">
        <svg width="32" height="32" viewBox="0 0 32 32">
          <path d="M0 0h32v25H0z" fill="#f4f8fb" /><path d="M1.500 1.500h29v21h-29z" fill="#1b74ac" /><path d="M1.500 15c8 3 20 2 29-1v8.500h-29z" fill="#0a2a45" /><path d="M12 25h8l1 4h4v2H7v-2h4z" fill="#e4e8ec" />
          <text x="16" y="15" fill="#fff" fontSize="7" fontStyle="italic" fontWeight="bold" fontFamily="Liberation Sans" textAnchor="middle">lenovo</text>
        </svg>
      </TaskItem>
      <TaskItem $bg="linear-gradient(#998b78, #8d8272)" aria-label="Chrome">
        <svg width="30" height="30" viewBox="0 0 30 30">
          <circle cx="15" cy="15" r="14.500" fill="#4caf50" />
          <path d="M15 15 8.500 18.500 2.400 8A14.500 14.500 0 0 1 27.700 8H15z" fill="#e04a3a" />
          <path d="M27.700 8A14.500 14.500 0 0 1 14 29.500L21 18.500 19 9V8z" fill="#fcd03e" />
          <circle cx="15" cy="15" r="6.600" fill="#fff" /><circle cx="15" cy="15" r="5.200" fill="#4a86e8" />
        </svg>
      </TaskItem>
      <TaskItem aria-label="Яндекс">
        <svg width="32" height="32" viewBox="0 0 32 32"><path d="M3 0h20q2 0 3 2l6 14-6 14q-1 2-3 2H3q-3 0-3-3V3q0-3 3-3z" fill="#e4e4e4" />
          <text x="12" y="26" fill="#e4201b" fontSize="27" fontWeight="bold" fontFamily="Roboto Condensed, Liberation Sans" textAnchor="middle">Я</text></svg>
      </TaskItem>
      <TaskItem aria-label="Почта">
        <svg width="32" height="32" viewBox="0 0 32 32"><path d="M3 1h20q2 0 3 2l6 13-6 13q-1 2-3 2H3q-3 0-3-3V4q0-3 3-3z" fill="#2c72bd" /><path d="M4 8h21v16H4z" fill="#f4f8fc" /><path d="m4 8 10.500 9L25 8M4 24l7.500-8M25 24l-7.500-8" fill="none" stroke="#6c9cd0" strokeWidth="1.300" /></svg>
      </TaskItem>
      <TaskItem $bg="linear-gradient(150deg, #ecc24e, #e0a040 60%, #e88c50)" aria-label="Mail.Ru">
        <svg width="32" height="32" viewBox="0 0 32 32"><circle cx="16" cy="16" r="15.500" fill="#e4322b" /><path d="M6 10h20v13H6z" fill="#fff" /><path d="m6 10 10 8 10-8M6 23l7-7M26 23l-7-7" fill="none" stroke="#e4322b" strokeWidth="1.800" /></svg>
      </TaskItem>
      <Tray>
        <Charge>35%</Charge>
        <TrayIcon $gap={19} aria-label="Скрытые значки"><svg width="8" height="6"><path d="m0 5 4-4 4 4z" fill="#fff" /></svg></TrayIcon>
        <TrayIcon $gap={13} aria-label="Центр поддержки"><svg width="16" height="16"><path d="M1 1v14" stroke="#fff" strokeWidth="1.600" /><path d="M3 2h6v2h5.500l-2 3v2H8V7.500H3z" fill="#fff" /></svg></TrayIcon>
        <TrayIcon $gap={14} aria-label="Батарея"><svg width="10" height="16"><path d="M1.500 3.500h7v11h-7zM3.500 1.500h3" fill="none" stroke="#fff" strokeWidth="1.500" /><path d="M3 9h4v4H3z" fill="#fff" /></svg></TrayIcon>
        <TrayIcon $gap={8} aria-label="Сеть"><svg width="16" height="14"><path d="M0 11h2v2H0zM3 9h2v4H3zM6 7h2v6H6zM9 4.500h2V13H9zM12.500 1.500h2.500V13h-2.500z" fill="#fff" /></svg></TrayIcon>
        <TrayIcon $gap={12} aria-label="Звук"><svg width="8" height="14"><path d="M0 4.500h2.500L7 .5v13L2.500 9.500H0z" fill="#fff" /></svg></TrayIcon>
        <Lang>РУС</Lang>
        <Clock>12:10<br />13.02.2017</Clock>
      </Tray>
    </TaskBar>
  );
}

export default function App() {
  return (
    <>
      <Global />
      <Page>
        <Browser />
        <DocChrome />
        <Workbook />
        <Desktop />
      </Page>
    </>
  );
}
